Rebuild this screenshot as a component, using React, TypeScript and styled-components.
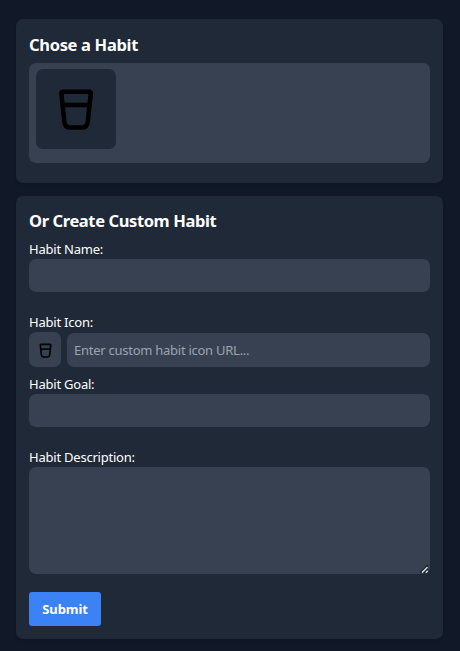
import React from "react";
import styled, { createGlobalStyle } from "styled-components";

const GlobalStyle = createGlobalStyle`
  * { box-sizing: border-box; }
  body {
    margin: 0;
    background: #111827;
    color: #fff;
    font-family: "Noto Sans", "Open Sans", sans-serif;
    font-size: 13px;
  }
`;

const Page = styled.main`
  display: flex;
  flex-direction: column;
  gap: 13px;
  min-height: 651px;
  padding: 19px 17px 12px 16px;
`;

const Card = styled.section<{ $height: number }>`
  height: ${(p) => p.$height}px;
  padding: 13px;
  border-radius: 7px;
  background: #1f2937;
  box-shadow: 0 3px 5px -1px rgba(0, 0, 0, 0.1), 0 2px 3px -2px rgba(0, 0, 0, 0.1);
`;

const Title = styled.h2<{ $height: number; $gap: number; $spacing: number }>`
  margin: 0 0 ${(p) => p.$gap}px;
  font-size: 16.5px;
  line-height: ${(p) => p.$height}px;
  font-weight: 700;
  letter-spacing: ${(p) => p.$spacing}px;
  white-space: nowrap;
`;

const HabitList = styled.div`
  height: 100px;
  padding: 6px 7px;
  border-radius: 7px;
  background: #374151;
`;

const HabitTile = styled.button`
  display: flex;
  align-items: center;
  justify-content: center;
  width: 80px;
  height: 80px;
  padding: 0;
  border: 0;
  border-radius: 7px;
  background: #1f2937;
  color: #000;
`;

const Form = styled.form`
  display: flex;
  flex-direction: column;
  align-items: stretch;
`;

const Field = styled.div<{ $gap: number }>`
  display: flex;
  flex-direction: column;
  margin-bottom: ${(p) => p.$gap}px;
`;

const Label = styled.label`
  line-height: 20px;
  letter-spacing: -0.22px;
`;

const Input = styled.input<{ $height?: number }>`
  flex: none;
  width: 100%;
  min-width: 0;
  height: ${(p) => p.$height ?? 33}px;
  padding: 0 7px;
  border: 0;
  outline: 0;
  border-radius: 7px;
  background: #374151;
  color: #fff;
  font: inherit;
  letter-spacing: -0.26px;
  &::placeholder { color: #9ca3af; opacity: 1; }
`;

const IconRow = styled.div`
  display: grid;
  grid-template-columns: 32px 1fr;
  column-gap: 6px;
  align-items: end;
`;

const IconPreview = styled.div`
  display: flex;
  align-items: center;
  justify-content: center;
  height: 35px;
  padding-top: 2px;
  border-radius: 7px;
  background: #374151;
  color: #000;
`;

const TextAreaFrame = styled.div`
  position: relative;
  height: 107px;
`;

const TextArea = styled.textarea`
  display: block;
  width: 100%;
  height: 107px;
  padding: 7px;
  border: 0;
  outline: 0;
  border-radius: 7px;
  background: #374151;
  color: #fff;
  font: inherit;
  resize: none;
`;

const Grip = styled.svg`
  position: absolute;
  right: 2px;
  bottom: 1px;
  pointer-events: none;
`;

const Submit = styled.button`
  align-self: flex-start;
  width: 72px;
  height: 34px;
  padding: 0;
  border: 0;
  border-radius: 3px;
  background: #3b82f6;
  color: #fff;
  font: inherit;
  font-weight: 700;
  letter-spacing: -0.1px;
`;

function GlassIcon({ size }: { size: number }) {
  return (
    <svg width={size} height={size} viewBox="0 0 48 48" fill="none" stroke="currentColor" strokeWidth="4.5" strokeLinejoin="round">
      <path d="M11 6.7H37.2Q39 6.7 38.8 8.7L35.8 36.6Q35 42.4 30.3 42.4H17.8Q13.1 42.4 12.3 36.6L9.4 8.7Q9.2 6.7 11 6.7Z" />
      <path d="M10.8 20H37.6" />
    </svg>
  );
}

function ResizeGrip() {
  return (
    <Grip width="8" height="8" viewBox="0 0 8 8" fill="none" aria-hidden="true">
      <path d="M0 7L7 0H8V8H1Z" fill="#111827" />
      <path d="M2 7.6L7.6 2M5.8 7.8L7.8 5.8" stroke="#d1d1d1" strokeWidth="1.7" />
    </Grip>
  );
}

export default function App() {
  return (
    <>
      <GlobalStyle />
      <Page>
        <Card $height={164}>
          <Title $height={26} $gap={5} $spacing={-0.33}>Chose a Habit</Title>
          <HabitList>
            <HabitTile type="button" aria-label="Drink water">
              <GlassIcon size={48} />
            </HabitTile>
          </HabitList>
        </Card>
        <Card $height={443}>
          <Title $height={24} $gap={6} $spacing={-0.39}>Or Create Custom Habit</Title>
          <Form onSubmit={(e) => e.preventDefault()}>
            <Field $gap={20}>
              <Label htmlFor="name">Habit Name:</Label>
              <Input id="name" />
            </Field>
            <Field $gap={7}>
              <Label htmlFor="icon">Habit Icon:</Label>
              <IconRow>
                <IconPreview>
                  <GlassIcon size={17} />
                </IconPreview>
                <Input id="icon" $height={34} placeholder="Enter custom habit icon URL..." />
              </IconRow>
            </Field>
            <Field $gap={20}>
              <Label htmlFor="goal">Habit Goal:</Label>
              <Input id="goal" />
            </Field>
            <Field $gap={18}>
              <Label htmlFor="description">Habit Description:</Label>
              <TextAreaFrame>
                <TextArea id="description" />
                <ResizeGrip />
              </TextAreaFrame>
            </Field>
            <Submit type="submit">Submit</Submit>
          </Form>
        </Card>
      </Page>
    </>
  );
}
